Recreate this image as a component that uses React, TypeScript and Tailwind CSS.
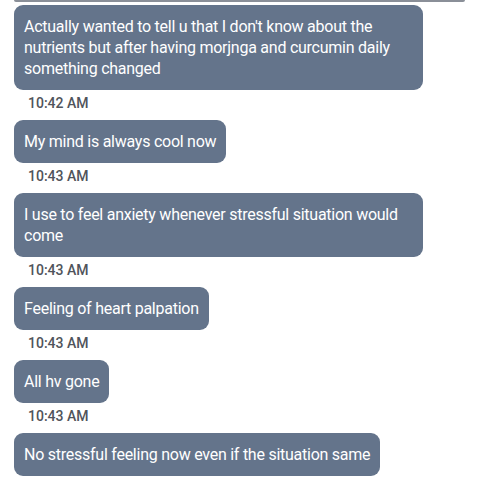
import React from 'react';

type Msg = { text: string; time?: string };

const messages: Msg[] = [
  {
    text: "Actually wanted to tell u that I don't know about the nutrients but after having morjnga and curcumin daily something changed",
    time: '10:42 AM',
  },
  { text: 'My mind is always cool now', time: '10:43 AM' },
  { text: 'I use to feel anxiety whenever stressful situation would come', time: '10:43 AM' },
  { text: 'Feeling of heart palpation', time: '10:43 AM' },
  { text: 'All hv gone', time: '10:43 AM' },
  { text: 'No stressful feeling now even if the situation same' },
];

const App: React.FC = () => {
  return (
    <div className="w-[480px] h-[480px] bg-white overflow-hidden font-['Roboto',sans-serif]">
      {/* edge of the previous bubble */}
      <div className="ml-[14px] w-[451px] h-[2px] bg-[#8a8f98] rounded-b" />

      <div className="pl-[14px] pt-[3px] flex flex-col items-start">
        {messages.map((m, i) => (
          <React.Fragment key={i}>
            <div className="max-w-[409px] bg-[#64748b] text-white text-[16px] leading-[21px] tracking-[-0.25px] px-[10px] py-[11px] rounded-[9px]">
              {m.text}
            </div>
            {m.time && (
              <div className="h-[30px] pl-[14px] pt-[5px] text-[14px] leading-[16px] font-medium text-[#50545b]">
                {m.time}
              </div>
            )}
          </React.Fragment>
        ))}
      </div>
    </div>
  );
};

export default App;
